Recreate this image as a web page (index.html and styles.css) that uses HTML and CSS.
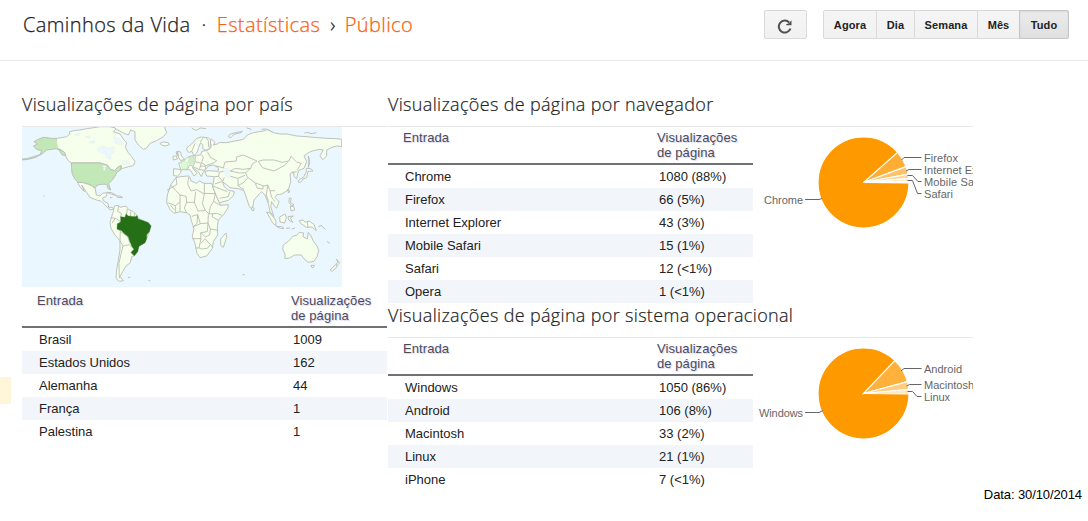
FILE: index.html
```html
<!DOCTYPE html>
<html lang="pt-BR">
<head>
<meta charset="utf-8">
<title>Caminhos da Vida - Estatísticas</title>
<link rel="stylesheet" href="styles.css">
</head>
<body>
<header class="topbar">
  <nav class="crumbs"><span class="blog">Caminhos da Vida</span><span class="dot">·</span><a class="stats">Estatísticas</a><span class="arrow">›</span><a class="audience">Público</a></nav>
  <div class="actions">
    <button class="btn refresh" aria-label="Atualizar"><svg width="16" height="16" viewBox="0 0 16 16"><path d="M13.500 10.500A6 6 0 1 1 12.300 4.600" fill="none" stroke="#505050" stroke-width="2"/><path d="M14.500 2.200V7.200H9.200V6.200L12 5.200Z" fill="#505050"/></svg></button>
    <div class="range"><button class="btn w1">Agora</button><button class="btn w2">Dia</button><button class="btn w3">Semana</button><button class="btn w4">Mês</button><button class="btn w5 active">Tudo</button></div>
  </div>
</header>
<main class="content">
  <aside class="gutter"><div class="marker"></div></aside>
  <section class="countries">
    <h2>Visualizações de página por país</h2>
    <svg class="map" width="320" height="160" viewBox="0 0 320 160">
      <rect width="320" height="160" fill="#eaf7fe"/>
      <g transform="translate(-2 -7) scale(.33333)" class="land">
        <path d="M109 55L125 53L140 50L150 42L148 36L160 32L180 30L200 26L215 24L240 20H270L290 25L280 35L300 42L312 60L320 68L316 82L325 98L335 110L345 125L340 137L325 140L305 146L302 137L290 146L283 152L270 148L260 140L250 132L240 129H154L145 122L138 110L130 95L120 88L109 86Z"/>
        <path d="M275 16L290 28L310 39L325 45L332 30L345 35L345 60L355 75L370 88L380 84L390 70L410 62L430 50L440 38L432 16Z"/>
        <path d="M420 70L430 66L445 68L448 74L436 78L424 75Z"/>
        <path class="water" d="M238 82L250 78L265 85L280 80L283 95L272 103L272 117L262 116L258 104L240 96L232 90ZM195 50L212 48L207 56ZM207 66L225 62L222 70ZM163 44L180 39L175 48ZM307 124L326 122L330 132L310 134ZM280 50L300 56L305 75L286 70Z"/>
        <path class="us" d="M109 55L95 55L70 52L55 58L42 65L53 72L40 78L50 88L65 92L60 104L40 110L20 116L6 117V120L25 118L45 113L66 102L80 90L109 86L121 89L135 98L137 107L127 105L115 88"/>
        <path class="us" d="M154 129H240L262 135L272 148L283 152L295 140L304 137L302 150L290 157L287 165L277 180L266 191L272 210L265 207L260 193L245 193L232 195L225 205L215 197L205 192L190 188L175 187L165 178L156 160Z"/>
        <path class="water" d="M247 136L260 138L256 142L255 152L250 151L251 143Z"/>
        <path d="M172 187L190 188L205 193L217 198L226 207L229 225L240 228L248 220L262 218L258 230L247 234L253 245L264 250L266 262L277 262L281 268L270 269L258 258L245 244L230 240L210 232L195 210L185 195L193 215L180 200Z"/>
        <path d="M262 217L275 218L288 226L276 223ZM289 227L303 229L308 233L292 232ZM270 233L277 233"/>
        <path d="M283 258L295 256L300 262L318 258L325 268L340 275L350 285L352 292L365 300L385 308L393 318L388 335L380 355L375 368L355 380L352 395L342 408L335 410L331 428L318 438L308 455L300 470L310 482L298 484L288 475L290 450L295 420L300 390L300 362L285 345L273 325L270 308L275 290L280 275Z"/>
        <path class="border" d="M296 258L293 274L304 280L302 294M322 267L319 284M332 275V289M343 279V290M272 293L286 295L276 310M286 295L301 304M293 326L301 334L300 362L309 378L303 402L297 430L298 475M309 378L327 374L341 386M301 334L323 350L330 370M333 398L342 408"/>
        <path class="brazil" d="M302 290L315 292L318 282L325 288L345 290L352 287L354 297L366 301L385 308L393 318L388 335L380 344V356L375 368L357 379L353 395L343 407L333 397L342 388L335 378L330 365L325 350L312 340L305 332L291 327L292 311L302 306Z"/>
        <path class="border" d="M70 228h4M324 472h7M385 481l6 2"/>
      </g>
      <g transform="translate(158 -7) scale(.33333)" class="land">
        <path d="M-12 173L2 170L25 168L30 172L33 183L50 190L58 183L72 190L95 190L100 205L108 225L118 248L122 256L145 254L144 264L130 285L115 300L112 320L113 345L100 365L97 385L80 408L60 413L51 400L45 370L37 350L42 325L35 305L30 285L20 278L0 275L-18 280L-30 268L-40 248L-38 225L-28 195Z"/>
        <path d="M138 339L140 352L130 382L122 376L122 357Z"/>
        <path d="M3 150L-4 130L10 124L22 112L33 108L50 107L62 104L66 94L82 91L92 84L94 75L88 62L94 57L105 67L100 75L112 72L118 68L140 68L160 64L190 58L202 45L220 38L250 33L265 30L280 38L300 42L320 42L350 48L380 50L400 52L440 55L470 56L485 58V80L470 78L455 82L440 90L440 108L428 119L420 107L430 90L420 88L400 92L385 98L372 108L380 125L372 145L355 152L350 176L343 170L340 155L330 162L332 185L325 210L305 222L290 225L285 232L297 245L290 265L283 258L275 245L272 260L282 290L270 275L265 250L255 225L245 215L235 225L222 240L217 267L208 260L200 235L192 212L180 207L165 205L150 203L140 194L128 186L133 200L143 210L163 215L160 227L145 241L118 248L108 225L98 200L103 170L80 168L75 155L85 152L115 154L115 143L100 135L85 138L75 150L69 158L64 170L55 155L45 148L37 142L51 160L42 168L30 149L10 149Z"/>
        <path d="M-19 146L3 149L2 158L-8 169L-20 166Z"/>
        <path d="M22 95L20 84L34 73L50 55L65 51L85 54L92 60L90 84L78 91L68 86L69 76L62 68L55 85L52 96L42 107L36 94L28 97Z"/>
        <path class="water" d="M130 145L142 145L150 151L143 154L151 166L147 174L138 167Z"/>
        <path d="M-7 94L2 96L4 108L14 118L2 122L-4 112ZM-21 109L-11 108L-8 117L-20 120ZM-12 96L-7 94L-8 107Z"/>
        <path class="border" d="M-28 195L0 225L18 229M-12 173L-9 193L-39 211M26 171L23 192L33 213L50 209L73 222V190M73 220L106 221M18 229L20 247L43 247L47 215M0 225V246L-14 257L-37 248M20 247L13 264L20 279M43 247L54 273L76 271L87 282L110 280L126 286M73 222L67 251L76 271M106 220L101 244L91 260L87 282M101 244L122 257M35 289L53 284L51 310L38 322M53 284L61 311L39 321M61 311L84 309L82 335L62 338L63 356L37 356M84 309L91 327L113 331M91 327L89 345L76 351L63 338M63 356L57 384H46M63 370L75 356L91 374L82 385L65 387L57 384M91 374L98 382M85 283L84 309M114 300L97 291L98 282M0 246V274M-14 257V277M-29 255L-18 269"/>
        <path class="border" d="M65 104L70 112L65 128L78 137L103 128L110 122L92 113L82 95M46 109L45 125L64 130L58 149L39 140L44 127M77 138L77 149M58 149L75 151M60 138L78 139M70 53L61 66M76 51L85 62L86 81M45 70L36 92M22 149L29 134L39 139"/>
        <path class="border" d="M107 137L130 144L135 126L169 123L170 111L190 105L231 123L217 132L212 145L189 148L166 145L151 153M235 124L250 120L282 120L307 127L327 123L333 109L351 127L364 130L351 151M235 124L247 143L282 153L311 138L323 127M212 145L196 158L203 172L226 189L252 198L263 195L270 212L285 212M150 153L178 159L196 158M151 169L173 175L195 166M174 175V197L192 209M203 174L190 188L174 197M104 170L116 169L128 184L104 192M116 169L118 156L131 154M128 184L133 172M98 198L142 215M119 235L145 230L149 215M226 190L232 205L249 207L249 198M263 195L259 225L266 248M270 212L275 232L285 245M336 158L350 155"/>
        <path d="M145 50L150 43L166 38L187 34L183 38L161 43L153 53ZM373 39L383 37L393 41L409 38M200 24L210 26L213 31M245 28L258 27L278 36M35 24L48 31L62 24L78 26"/>
        <path d="M385 108L389 128L385 142L387 119ZM379 145L392 146L399 153L384 154L382 163L380 173L369 177L362 187L354 186L358 178L371 172L379 155ZM323 207L329 213L326 219ZM217 260L223 267L220 273L215 270ZM328 234L334 235L331 248L342 255L335 257L327 247ZM331 258L341 260L344 270L333 273Z"/>
        <path d="M260 276L270 279L287 300L288 317L278 309ZM289 319L305 320L312 325L301 325ZM299 291L315 282L319 293L314 309L300 306ZM324 290L340 288L331 294L338 307L326 300ZM358 302L369 300L376 307L387 303L402 313L409 332L395 321L379 322L362 310ZM318 325L330 324M335 327L345 324M415 320L426 316M424 317L436 328"/>
        <path class="border" d="M382 304L384 322M441 364L450 371M188 464h6"/>
        <path d="M310 375L325 364L340 348L350 346L358 337L371 339L369 350L382 357L385 337L393 347L399 362L411 378L416 391L412 409L402 424L384 427L372 416L364 405L344 405L328 414L315 416L315 402L308 387Z"/>
        <path d="M393 436L403 436L400 443L395 442ZM469 417L479 428L470 438L468 431L474 427ZM467 434L472 440L457 454L450 450Z"/>
        <path class="france" d="M2 128L12 123L24 130L21 147L8 148Z"/>
        <path class="germany" d="M27 112L42 109L42 125L37 133L25 128Z"/>
      </g>
    </svg>
    <table class="tall">
      <thead><tr><th>Entrada</th><th>Visualizações<br>de página</th></tr></thead>
      <tbody>
        <tr><td>Brasil</td><td>1009</td></tr>
        <tr><td>Estados Unidos</td><td>162</td></tr>
        <tr><td>Alemanha</td><td>44</td></tr>
        <tr><td>França</td><td>1</td></tr>
        <tr><td>Palestina</td><td>1</td></tr>
      </tbody>
    </table>
  </section>
  <div class="right">
    <section>
      <h2>Visualizações de página por navegador</h2>
      <div class="panel">
        <table>
          <thead><tr><th>Entrada</th><th>Visualizações<br>de página</th></tr></thead>
          <tbody>
            <tr><td>Chrome</td><td>1080 (88%)</td></tr>
            <tr><td>Firefox</td><td>66 (5%)</td></tr>
            <tr><td>Internet Explorer</td><td>43 (3%)</td></tr>
            <tr><td>Mobile Safari</td><td>15 (1%)</td></tr>
            <tr><td>Safari</td><td>12 (&lt;1%)</td></tr>
            <tr><td>Opera</td><td>1 (&lt;1%)</td></tr>
          </tbody>
        </table>
        <svg class="pie" width="220" height="120" viewBox="753 127 220 120">
          <g transform="translate(863.5 182.5)" stroke="#fff" stroke-width="1.2">
            <circle r="45.5" fill="#ff9900"/>
            <path d="M0 0L34.1 -30.1A45.5 45.5 0 0 1 42.6 -15.9Z" fill="#ffad33"/>
            <path d="M0 0L42.6 -15.9A45.5 45.5 0 0 1 44.7 -8.3Z" fill="#ffc266"/>
            <path d="M0 0L44.7 -8.3A45.5 45.5 0 0 1 45.3 -4.2Z" fill="#ffd699"/>
            <path d="M0 0L45.3 -4.2A45.5 45.5 0 0 1 45.5 -1Z" fill="#ffebcc"/>
            <path d="M0 0L45.5 -1V.5Z" fill="#fff"/>
          </g>
          <path class="lead" d="M805 199.500H819L822 198.500M901.500 160L904 157.500H921.500M906 171L909 169.500H921.500M907.500 175.500H912.500L918 181.500H921.500M907.500 180.500H912.500L917.500 193.500H921.500"/>
          <text x="764" y="204" textLength="39">Chrome</text>
          <text x="924" y="162" textLength="34">Firefox</text>
          <text x="924" y="174" textLength="82">Internet Explorer</text>
          <text x="924" y="186" textLength="66">Mobile Safari</text>
          <text x="924" y="198" textLength="29">Safari</text>
        </svg>
      </div>
    </section>
    <section>
      <h2>Visualizações de página por sistema operacional</h2>
      <div class="panel">
        <table>
          <thead><tr><th>Entrada</th><th>Visualizações<br>de página</th></tr></thead>
          <tbody>
            <tr><td>Windows</td><td>1050 (86%)</td></tr>
            <tr><td>Android</td><td>106 (8%)</td></tr>
            <tr><td>Macintosh</td><td>33 (2%)</td></tr>
            <tr><td>Linux</td><td>21 (1%)</td></tr>
            <tr><td>iPhone</td><td>7 (&lt;1%)</td></tr>
          </tbody>
        </table>
        <svg class="pie" width="220" height="120" viewBox="753 338 220 120">
          <g transform="translate(863.5 393.5)" stroke="#fff" stroke-width="1.2">
            <circle r="45.5" fill="#ff9900"/>
            <path d="M0 0L31.3 -33A45.5 45.5 0 0 1 44 -11.8Z" fill="#ffb13c"/>
            <path d="M0 0L44 -11.8A45.5 45.5 0 0 1 45.3 -4Z" fill="#ffcc80"/>
            <path d="M0 0L45.3 -4A45.500 45.500 0 0 1 45.500 .5Z" fill="#ffe8c4"/>
          </g>
          <path class="lead" d="M805 412.500H819L823 410.500M901 371L904 368.500H921.500M906.500 386L909.500 384.500H921.500M907.500 391.500H912.500L917 396.500H921.500"/>
          <text x="759" y="417" textLength="44">Windows</text>
          <text x="924" y="373" textLength="38">Android</text>
          <text x="924" y="389" textLength="50">Macintosh</text>
          <text x="924" y="401" textLength="26">Linux</text>
        </svg>
      </div>
    </section>
  </div>
</main>
<footer class="date">Data: 30/10/2014</footer>
</body>
</html>
```
FILE: styles.css
```css
* { box-sizing: border-box; }
body {
  margin: 0;
  width: 1088px;
  height: 521px;
  overflow: hidden;
  background: #fff;
  color: #222;
  font: 13px/15px "Liberation Sans", Arial, sans-serif;
}
.topbar {
  display: flex;
  justify-content: space-between;
  height: 61px;
  padding: 10px 19px 0 23px;
  border-bottom: 1px solid #e8e8e8;
}
.crumbs {
  display: flex;
  height: 30px;
  font: 300 20px/30px "Open Sans", sans-serif;
  letter-spacing: 0.39px;
  -webkit-text-stroke: 0.25px currentColor;
  color: #222;
  white-space: nowrap;
}
.crumbs a { color: #f9610f; }
.dot { margin: 0 10px 0 11px; }
.arrow { margin: 0 9px 0 10px; }
.actions { display: flex; gap: 16px; }
.btn {
  display: flex;
  align-items: center;
  justify-content: center;
  height: 29px;
  margin: 0;
  padding: 0;
  border: 1px solid #d9d9d9;
  background: linear-gradient(#f5f5f5, #f1f1f1);
  color: #222;
  font: bold 11px "Liberation Sans", Arial, sans-serif;
  letter-spacing: 0.1px;
}
.refresh { width: 43px; border-radius: 2px; }
.refresh svg { margin-top: 2px; margin-right: 1px; }
.range { display: flex; }
.range .btn + .btn { margin-left: -1px; }
.range .btn:first-child { border-radius: 2px 0 0 2px; }
.range .btn:last-child { border-radius: 0 2px 2px 0; }
.w1 { width: 54px; }
.w2 { width: 39px; }
.w3 { width: 64px; }
.w4 { width: 43px; }
.w5 { width: 50px; }
.btn.active {
  border-color: #c6c6c6;
  background: linear-gradient(#ebebeb, #e0e0e0);
  box-shadow: inset 0 1px 2px rgba(0, 0, 0, 0.08);
}
.content {
  display: grid;
  grid-template-columns: 22px 365px 585px;
  column-gap: 0;
  height: 426px;
  padding-top: 31px;
}
.right { margin-left: 1px; width: 585px; }
.marker {
  width: 11px;
  height: 27px;
  margin-top: 285px;
  background: #fff5d8;
}
h2 {
  height: 35px;
  margin: 0;
  border-bottom: 1px solid #e8e8e8;
  font: 300 18px/25px "Open Sans", sans-serif;
  letter-spacing: 0.33px;
  -webkit-text-stroke: 0.2px currentColor;
  color: #222;
  white-space: nowrap;
}
.map { display: block; }
.land path {
  fill: #f6ffec;
  stroke: #b8b8b4;
  stroke-width: 2.6;
  stroke-linejoin: round;
}
.land .border { fill: none; }
.land .water { fill: #eaf7fe; stroke: #dbe8e4; stroke-width: 1; }
.land .us { fill: #c2e8b8; }
.land .brazil { fill: #256f16; stroke: #256f16; stroke-width: 1; }
.land .france { fill: #d8ffd0; stroke-width: 1; }
.land .germany { fill: #ccf2c4; stroke-width: 1; }
.panel { display: flex; }
table {
  width: 365px;
  table-layout: fixed;
  border-spacing: 0;
}
th {
  height: 38px;
  padding: 3px 0 0 15px;
  border-bottom: 2px solid #707175;
  color: #4c4c57;
  font-weight: normal;
  letter-spacing: 0.08px;
  text-align: left;
  text-shadow: 1px 1px 1px #d2d2f5;
  vertical-align: top;
}
.tall th { height: 41px; padding-top: 6px; }
th:first-child { width: 254px; }
td {
  height: 23px;
  padding: 0 0 0 17px;
}
tbody tr:nth-child(even) td { background: #f2f6fb; }
.pie { display: block; overflow: hidden; }
.pie text { font: 11px "Liberation Sans", Arial, sans-serif; fill: #666; }
.lead { fill: none; stroke: #666; stroke-width: 1; }
.date {
  padding-right: 6px;
  color: #000;
  letter-spacing: -0.1px;
  text-align: right;
}
```
